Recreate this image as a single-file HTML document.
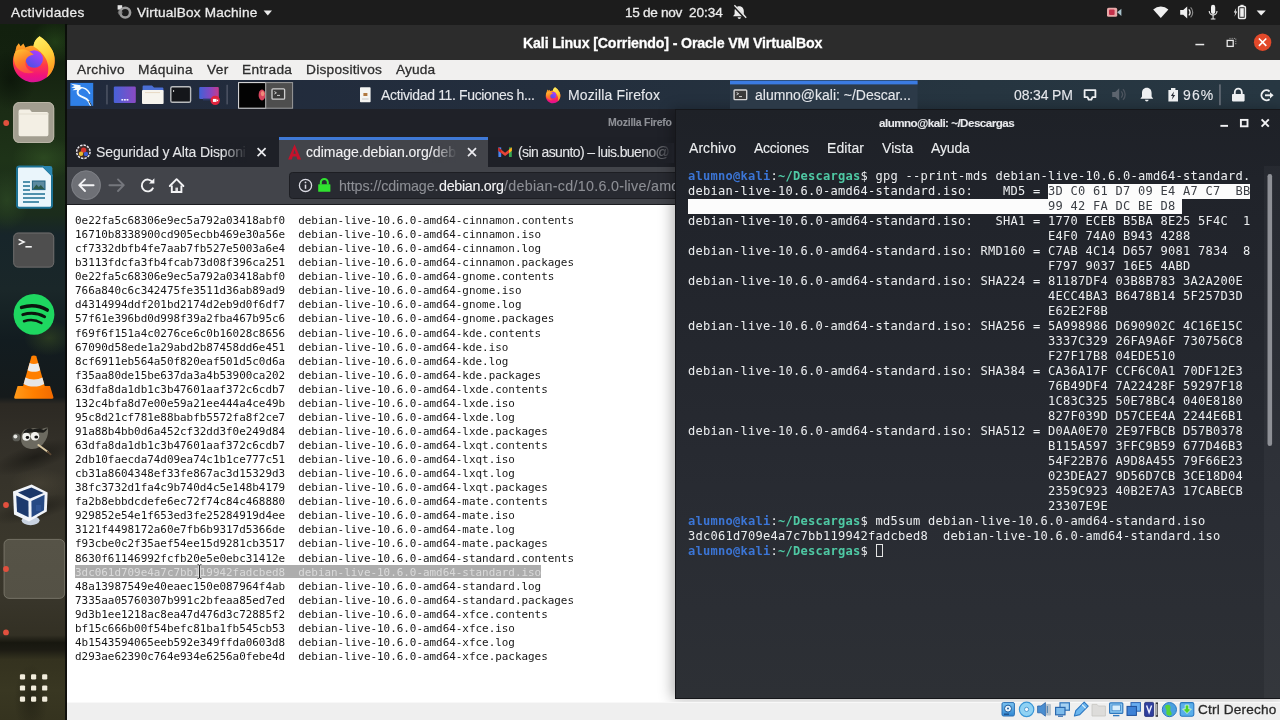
<!DOCTYPE html>
<html lang="es">
<head>
<meta charset="utf-8">
<title>Kali Linux [Corriendo] - Oracle VM VirtualBox</title>
<style>
*{box-sizing:border-box;margin:0;padding:0}
html,body{width:1280px;height:720px;overflow:hidden;background:#1d1d1d;font-family:"Liberation Sans",sans-serif;}
#root{position:relative;width:1280px;height:720px;overflow:hidden}
#root div,#root svg,#root pre,#root span.a{position:absolute}
.t{will-change:transform;-webkit-text-stroke:.3px;white-space:pre;font-family:"Liberation Sans",sans-serif}
/* gnome top bar */
#topbar{left:0;top:0;width:1280px;height:24.5px;background:#1c1c1c}
/* dock */
#dock{left:0;top:24px;width:68px;height:696px;overflow:hidden;background:linear-gradient(180deg,#12200e 0%,#13210f 5.2%,#1a2a14 10.9%,#1e3318 19.5%,#1b2c1c 27.4%,#17252a 30.3%,#1a2729 38.2%,#121c20 45.4%,#151a1b 53.6%,#2c2923 54.6%,#322f28 59.8%,#36332a 65.5%,#3a372c 74.1%,#38352a 82.8%,#333024 87.8%,#17170f 88.9%,#1c1b13 89.9%,#34321f 91.3%,#393722 95.7%,#35331f 100%)}
/* vbox */
#vtitle{left:67px;top:25px;width:1213px;height:35px;background:#2c2c2c}
#vmenu{left:67px;top:60px;width:1213px;height:20.5px;background:#f1f0ef}
#vstatus{left:67px;top:701.5px;width:1213px;height:19px;background:#efefef;border-top:1px solid #f8f8f8}
#vm{left:67px;top:80.4px;width:1213px;height:621.6px;background:#fff;overflow:hidden}
/* everything inside #vm uses page coords via wrapper shifted */
#vmi{left:-67px;top:-80.4px;width:1280px;height:720px}
#kpanel{left:67px;top:80.4px;width:1213px;height:28.6px;background:linear-gradient(90deg,#212a3c 0%,#232e3d 40%,#263540 75%,#273742 100%)}
#fftitle{left:67px;top:109px;width:608px;height:28px;background:#1f2128}
#fftabs{left:67px;top:137px;width:608px;height:30px;background:#1e2027}
#fftab{left:278.5px;top:137px;width:209.5px;height:30px;background:#42444a;border-top:3px solid #3f79d6}
#ffnav{left:67px;top:167px;width:608px;height:38px;background:#42444a;border-bottom:1.5px solid #1b1c20}
#ffurl{left:289.4px;top:171.6px;width:400px;height:27.8px;background:#282a31;border-radius:3.5px;border:1px solid #1d1e23}
#ffpage{left:67px;top:205px;width:608px;height:496px;background:#fff}
#list{will-change:transform;left:74.9px;top:213.7px;font-family:"DejaVu Sans Mono","Liberation Mono",monospace;font-size:10.93px;line-height:14.065px;color:#161616;white-space:pre;letter-spacing:-0.01px}
#list .sel{color:#dadada}
#term{left:674.5px;top:108.6px;width:612px;height:590.4px;background:linear-gradient(180deg,#1e2127 0%,#20232a 12%,#24272e 40%,#292c33 70%,#2d3035 100%);border:1px solid #15161a;box-shadow:-3px 0 13px rgba(0,0,0,.3)}
#tpre{will-change:transform;left:688px;top:168.5px;font-family:"DejaVu Sans Mono","Liberation Mono",monospace;font-size:12.05px;line-height:15px;color:#eceef0;white-space:pre;letter-spacing:0.246px}
#tpre b.u{color:#3b75d6;font-weight:700}
#tpre b.p{color:#4fc9a4;font-weight:700}
#tpre .hl{color:#3c3f45}
.thl{background:#fcfcfc}
#tpre .cur{display:inline-block;position:static;width:7.6px;height:13px;border:1px solid #e4e4e4;vertical-align:-1.6px}
</style>
</head>
<body>
<div id="root">
<div id="topbar"></div>
<div id="dock">
  <div style="left:30px;top:-4px;width:50px;height:44px;border-radius:50%;background:radial-gradient(closest-side,rgba(44,84,30,.55),rgba(44,84,30,0))"></div>
  <div style="left:-14px;top:26px;width:50px;height:60px;border-radius:50%;background:radial-gradient(closest-side,rgba(6,14,6,.6),rgba(6,14,6,0))"></div>
  <div style="left:12px;top:112px;width:64px;height:44px;border-radius:50%;background:radial-gradient(closest-side,rgba(52,86,38,.6),rgba(52,86,38,0))"></div>
  <div style="left:-16px;top:146px;width:46px;height:60px;border-radius:50%;background:radial-gradient(closest-side,rgba(50,82,38,.55),rgba(50,82,38,0))"></div>
  <div style="left:24px;top:296px;width:50px;height:36px;border-radius:50%;background:radial-gradient(closest-side,rgba(62,84,34,.5),rgba(62,84,34,0))"></div>
  <div style="left:-10px;top:420px;width:90px;height:26px;border-radius:50%;transform:rotate(-18deg);background:radial-gradient(closest-side,rgba(18,17,14,.6),rgba(18,17,14,0))"></div>
  <div style="left:-10px;top:474px;width:90px;height:22px;border-radius:50%;transform:rotate(-14deg);background:radial-gradient(closest-side,rgba(20,19,15,.55),rgba(20,19,15,0))"></div>
  <div style="left:10px;top:444px;width:60px;height:30px;border-radius:50%;background:radial-gradient(closest-side,rgba(84,78,62,.4),rgba(84,78,62,0))"></div>
  <div style="left:14px;top:640px;width:34px;height:70px;border-radius:50%;background:radial-gradient(closest-side,rgba(24,23,14,.5),rgba(24,23,14,0))"></div>
  <div style="left:65.2px;top:0;width:2px;height:696px;background:rgba(8,8,8,.8)"></div>
</div>
<div id="vtitle"></div>
<div id="vmenu"></div>
<div id="vm"><div id="vmi">
  <div id="ffpage"></div>
  <div id="kpanel"></div>
  <div id="fftitle"></div>
  <div id="fftabs"></div>
  <div id="fftab"></div>
  <div id="ffnav"></div>
  <div id="ffurl"></div>
  <div style="left:75px;top:564.5px;width:466.4px;height:13.6px;background:#adadad"></div>
  <pre id="list">0e22fa5c68306e9ec5a792a03418abf0  debian-live-10.6.0-amd64-cinnamon.contents
16710b8338900cd905ecbb469e30a56e  debian-live-10.6.0-amd64-cinnamon.iso
cf7332dbfb4fe7aab7fb527e5003a6e4  debian-live-10.6.0-amd64-cinnamon.log
b3113fdcfa3fb4fcab73d08f396ca251  debian-live-10.6.0-amd64-cinnamon.packages
0e22fa5c68306e9ec5a792a03418abf0  debian-live-10.6.0-amd64-gnome.contents
766a840c6c342475fe3511d36ab89ad9  debian-live-10.6.0-amd64-gnome.iso
d4314994ddf201bd2174d2eb9d0f6df7  debian-live-10.6.0-amd64-gnome.log
57f61e396bd0d998f39a2fba467b95c6  debian-live-10.6.0-amd64-gnome.packages
f69f6f151a4c0276ce6c0b16028c8656  debian-live-10.6.0-amd64-kde.contents
67090d58ede1a29abd2b87458dd6e451  debian-live-10.6.0-amd64-kde.iso
8cf6911eb564a50f820eaf501d5c0d6a  debian-live-10.6.0-amd64-kde.log
f35aa80de15be637da3a4b53900ca202  debian-live-10.6.0-amd64-kde.packages
63dfa8da1db1c3b47601aaf372c6cdb7  debian-live-10.6.0-amd64-lxde.contents
132c4bfa8d7e00e59a21ee444a4ce49b  debian-live-10.6.0-amd64-lxde.iso
95c8d21cf781e88babfb5572fa8f2ce7  debian-live-10.6.0-amd64-lxde.log
91a88b4bb0d6a452cf32dd3f0e249d84  debian-live-10.6.0-amd64-lxde.packages
63dfa8da1db1c3b47601aaf372c6cdb7  debian-live-10.6.0-amd64-lxqt.contents
2db10faecda74d09ea74c1b1ce777c51  debian-live-10.6.0-amd64-lxqt.iso
cb31a8604348ef33fe867ac3d15329d3  debian-live-10.6.0-amd64-lxqt.log
38fc3732d1fa4c9b740d4c5e148b4179  debian-live-10.6.0-amd64-lxqt.packages
fa2b8ebbdcdefe6ec72f74c84c468880  debian-live-10.6.0-amd64-mate.contents
929852e54e1f653ed3fe25284919d4ee  debian-live-10.6.0-amd64-mate.iso
3121f4498172a60e7fb6b9317d5366de  debian-live-10.6.0-amd64-mate.log
f93cbe0c2f35aef54ee15d9281cb3517  debian-live-10.6.0-amd64-mate.packages
8630f61146992fcfb20e5e0ebc31412e  debian-live-10.6.0-amd64-standard.contents
<span class="sel">3dc061d709e4a7c7bb119942fadcbed8  debian-live-10.6.0-amd64-standard.iso</span>
48a13987549e40eaec150e087964f4ab  debian-live-10.6.0-amd64-standard.log
7335aa05760307b991c2bfeaa85ed7ed  debian-live-10.6.0-amd64-standard.packages
9d3b1ee1218ac8ea47d476d3c72885f2  debian-live-10.6.0-amd64-xfce.contents
bf15c666b00f54befc81ba1fb545cb53  debian-live-10.6.0-amd64-xfce.iso
4b1543594065eeb592e349ffda0603d8  debian-live-10.6.0-amd64-xfce.log
d293ae62390c764e934e6256a0febe4d  debian-live-10.6.0-amd64-xfce.packages</pre>
  <div id="term"></div>
  <div class="thl" style="left:1048px;top:184.1px;width:201.9px;height:15.1px"></div>
  <div class="thl" style="left:688px;top:199px;width:494.4px;height:14.6px"></div>
  <pre id="tpre"><b class="u">alumno@kali</b>:<b class="p">~/Descargas</b>$ gpg --print-mds debian-live-10.6.0-amd64-standard.
debian-live-10.6.0-amd64-standard.iso:    MD5 = <span class="hl">3D C0 61 D7 09 E4 A7 C7  BB</span>
<span class="hl">                                                99 42 FA DC BE D8 </span>
debian-live-10.6.0-amd64-standard.iso:   SHA1 = 1770 ECEB B5BA 8E25 5F4C  1
                                                E4F0 74A0 B943 4288
debian-live-10.6.0-amd64-standard.iso: RMD160 = C7AB 4C14 D657 9081 7834  8
                                                F797 9037 16E5 4ABD
debian-live-10.6.0-amd64-standard.iso: SHA224 = 81187DF4 03B8B783 3A2A200E
                                                4ECC4BA3 B6478B14 5F257D3D
                                                E62E2F8B
debian-live-10.6.0-amd64-standard.iso: SHA256 = 5A998986 D690902C 4C16E15C
                                                3337C329 26FA9A6F 730756C8
                                                F27F17B8 04EDE510
debian-live-10.6.0-amd64-standard.iso: SHA384 = CA36A17F CCF6C0A1 70DF12E3
                                                76B49DF4 7A22428F 59297F18
                                                1C83C325 50E78BC4 040E8180
                                                827F039D D57CEE4A 2244E6B1
debian-live-10.6.0-amd64-standard.iso: SHA512 = D0AA0E70 2E97FBCB D57B0378
                                                B115A597 3FFC9B59 677D46B3
                                                54F22B76 A9D8A455 79F66E23
                                                023DEA27 9D56D7CB 3CE18D04
                                                2359C923 40B2E7A3 17CABECB
                                                23307E9E
<b class="u">alumno@kali</b>:<b class="p">~/Descargas</b>$ md5sum debian-live-10.6.0-amd64-standard.iso
3dc061d709e4a7c7bb119942fadcbed8  debian-live-10.6.0-amd64-standard.iso
<b class="u">alumno@kali</b>:<b class="p">~/Descargas</b>$ <span class="cur"></span></pre>
</div></div>
<div id="vstatus"></div>
<svg id="ov" style="left:0;top:0" width="1280" height="720" viewBox="0 0 1280 720">
<defs>
<linearGradient id="ffb" x1="0" y1="0" x2="0" y2="1"><stop offset="0" stop-color="#ffc53a"/><stop offset=".34" stop-color="#ff8a1f"/><stop offset=".62" stop-color="#ff3a48"/><stop offset=".86" stop-color="#f0127e"/><stop offset="1" stop-color="#d81496"/></linearGradient>
<linearGradient id="fff" x1="0" y1="0" x2="0.3" y2="1"><stop offset="0" stop-color="#fff36a"/><stop offset=".55" stop-color="#ffd23a"/><stop offset="1" stop-color="#ff9a20"/></linearGradient>
<linearGradient id="fft" x1="0.2" y1="0" x2="0.6" y2="1"><stop offset="0" stop-color="#ffbe30"/><stop offset=".55" stop-color="#ff7a26"/><stop offset="1" stop-color="#ff4a4a"/></linearGradient>
<linearGradient id="ffg" x1="0.8" y1="0" x2="0.2" y2="1"><stop offset="0" stop-color="#b13cff"/><stop offset="1" stop-color="#4a52e6"/></linearGradient>
<linearGradient id="pur" x1="0" y1="0" x2="1" y2="0"><stop offset="0" stop-color="#4762d8"/><stop offset="1" stop-color="#8a4ac4"/></linearGradient>
<linearGradient id="rec" x1="0" y1="0" x2="1" y2="0"><stop offset="0" stop-color="#3f62d6"/><stop offset=".6" stop-color="#8a46c0"/><stop offset="1" stop-color="#c83a8a"/></linearGradient>
<linearGradient id="vlc" x1="0" y1="0" x2="1" y2="0"><stop offset="0" stop-color="#ff9a1a"/><stop offset=".5" stop-color="#ff7f00"/><stop offset="1" stop-color="#f26a00"/></linearGradient>
<linearGradient id="sbl" x1="0" y1="0" x2="0" y2="1"><stop offset="0" stop-color="#7cc4f2"/><stop offset="1" stop-color="#2f86d2"/></linearGradient>
<g id="ffx">
  <path d="M11.2,24 L12.4,18.6 L14.8,15.2 L16.6,18.2 L19.4,15.6 L21.4,19.4 C24,18 27,17.6 29.6,17.8 C29.8,14 32,10.6 35.6,8.3 C40.5,11.5 44.5,15.5 46.6,19.5 C49.6,23.4 51,28.6 50.6,33.6 C50.2,45 41,54.2 29.6,54.2 C18.2,54.2 8.9,45 8.9,33.4 C8.9,30 9.7,26.8 11.2,24 Z" fill="url(#ffb)"/>
  <path d="M35.6,8.3 C40.5,11.5 44.5,15.5 46.6,19.5 C50.2,24 51.6,31 50.2,38 C49,43 46,47 42.6,49.6 C45,44 45,37 42,31 C39,25.4 34.4,21.4 29.6,18.6 C29.6,14.4 32,10.6 35.6,8.3 Z" fill="url(#fff)"/>
  <circle cx="30.2" cy="31" r="8.8" fill="url(#ffg)"/>
  <path d="M11.4,23.4 C17,19.6 24,21 29.8,26.8 C25,27.2 21.6,30 21.3,34.6 C21.1,39.6 25,43.4 30.2,44 C23,47.4 14,43.4 11,36.2 C9.4,31.8 9.6,27.2 11.4,23.4 Z" fill="url(#fft)"/>
</g>
</defs>

<!-- ============ GNOME TOP BAR ============ -->
<g>
  <rect x="117.6" y="5.2" width="4.6" height="4.4" fill="#e4e4e4"/>
  <circle cx="125.2" cy="12.6" r="4.9" fill="none" stroke="#9c9c9c" stroke-width="2.6"/>
  <circle cx="120.2" cy="12.5" r="2.4" fill="#8a8a8a" opacity=".7"/>
  <path d="M263.6,10.4 h8.4 l-4.2,5 z" fill="#ebebeb"/>
  <!-- bell muted -->
  <path d="M739.2,6.2 c-3,0 -4.6,2.3 -4.6,5 v3 l-1.6,2 h12.4 l-1.6,-2 v-3 c0,-2.7 -1.6,-5 -4.6,-5 z M737.6,17.2 a1.7,1.7 0 0 0 3.4,0 z" fill="#ebebeb"/>
  <path d="M733.6,5.6 L745.6,18.4" stroke="#1c1c1c" stroke-width="2.6"/>
  <path d="M734.4,5.2 L746.2,17.8" stroke="#ebebeb" stroke-width="1.3"/>
  <!-- camera (screen recording) -->
  <rect x="1107" y="7.8" width="10.2" height="9" rx="1.6" fill="#e9a9a9"/>
  <rect x="1109" y="9.6" width="5.6" height="5.4" rx="1" fill="#c4314b"/>
  <path d="M1117.2,12.3 l4.2,-3.6 v7.4 z" fill="#a9c3cc"/>
  <!-- wifi -->
  <path d="M1160.8,18 L1153.2,9.4 A11.4,11.4 0 0 1 1168.4,9.4 Z" fill="#efefef"/>
  <!-- volume -->
  <path d="M1180.2,10 h3 l4,-3.6 v12 l-4,-3.6 h-3 z" fill="#efefef"/>
  <path d="M1188.8,9.4 a4.2,4.2 0 0 1 0,6" fill="none" stroke="#efefef" stroke-width="1.3"/>
  <path d="M1190.6,7.4 a7,7 0 0 1 0,10" fill="none" stroke="#8a8a8a" stroke-width="1.2"/>
  <!-- mic -->
  <rect x="1211" y="4.8" width="4.2" height="9.2" rx="2.1" fill="#efefef"/>
  <path d="M1209.2,11 a3.9,3.9 0 0 0 7.8,0" fill="none" stroke="#efefef" stroke-width="1.1"/>
  <path d="M1213.1,15 v3.6 M1210.8,19 h4.6" stroke="#efefef" stroke-width="1.1"/>
  <!-- battery -->
  <path d="M1236.2,8 l-2.4,4.6 h1.6 l-1,4.2 l2.8,-5.2 h-1.6 z" fill="#efefef"/>
  <rect x="1238.6" y="6.4" width="6.8" height="12" rx="1" fill="none" stroke="#efefef" stroke-width="1.5"/>
  <rect x="1240.4" y="4.8" width="3.2" height="1.8" fill="#efefef"/>
  <rect x="1240.2" y="8.2" width="3.6" height="8.6" fill="#efefef"/>
  <path d="M1256.6,10.4 h9.2 l-4.6,5.2 z" fill="#efefef"/>
</g>

<!-- ============ VBOX TITLE BUTTONS ============ -->
<g>
  <rect x="1195.4" y="43.8" width="8.8" height="1.5" fill="#e8e8e8"/>
  <rect x="1227.2" y="40.4" width="6" height="6" fill="none" stroke="#e8e8e8" stroke-width="1.3"/>
  <path d="M1229.4,38.4 h6.4 v6.4" fill="none" stroke="#9a9a9a" stroke-width="1" stroke-dasharray="1.2 1"/>
  <circle cx="1262.6" cy="42.2" r="8.7" fill="#e2492a"/>
  <path d="M1258.9,38.5 l7.4,7.4 M1266.3,38.5 l-7.4,7.4" stroke="#fff" stroke-width="1.6"/>
</g>

<!-- ============ DOCK ============ -->
<g>
  <use href="#ffx" transform="translate(4,28)"/>
  <!-- Files -->
  <circle cx="6.2" cy="123" r="2.9" fill="#e2503e"/>
  <rect x="13.2" y="102" width="41" height="41" rx="6" fill="#a29e90"/>
  <rect x="13.7" y="102.5" width="40" height="40" rx="5.6" fill="none" stroke="#b9b5a6" stroke-width="1"/>
  <path d="M18.6,111.2 a1.6,1.6 0 0 1 1.6,-1.6 h9.6 l2,2.4 h15 a1.6,1.6 0 0 1 1.6,1.6 v21 a1.6,1.6 0 0 1 -1.6,1.6 h-26.6 a1.6,1.6 0 0 1 -1.6,-1.6 z" fill="#f3efe4"/>
  <path d="M18.6,114 h30" stroke="#e2ddcf" stroke-width="1"/>
  <!-- Writer -->
  <path d="M19.4,166.4 h23.6 l9,9 v30 a2.4,2.4 0 0 1 -2.4,2.4 h-30.200000000000003 a2.4,2.4 0 0 1 -2.4,-2.4 v-36.6 a2.4,2.4 0 0 1 2.4,-2.4 z" fill="#eaf5fb" stroke="#1d7294" stroke-width="2"/>
  <path d="M42,166 l10.400000000000002,10.400000000000002 v-8 a2.4,2.4 0 0 0 -2.4,-2.4 z" fill="#2a86b0"/>
  <path d="M42.6,167 v8.6 h8.6" fill="#8fd0ea" opacity=".0"/>
  <rect x="32.4" y="181" width="12.6" height="8.6" fill="#5c8aa0" stroke="#1d5f7e" stroke-width="1"/>
  <path d="M33,189 l3.4,-4.6 l2.4,2.6 l2,-2 l3.6,4 z" fill="#2c5a4a"/>
  <path d="M23,182 h7 M23,186 h7 M23,190 h7 M23,194 h22 M23,198 h22 M23,202 h16" stroke="#1d6f92" stroke-width="1.5"/>
  <!-- Terminal -->
  <rect x="13.2" y="232.6" width="41" height="35" rx="5" fill="#4e4e4e"/>
  <rect x="13.7" y="233.1" width="40" height="34" rx="4.6" fill="none" stroke="#6a6a6a" stroke-width="1"/>
  <path d="M18.6,239.4 l5.4,2.6 l-5.4,2.6" fill="none" stroke="#f4f4f4" stroke-width="1.6"/>
  <rect x="25.4" y="246" width="6.4" height="1.6" fill="#f4f4f4"/>
  <!-- Spotify -->
  <circle cx="34" cy="314.4" r="20.4" fill="#1ed760"/>
  <path d="M21.6,307.4 c8.6,-2.600000000000001 18.4,-1.6 25.6,2.6" fill="none" stroke="#0c140e" stroke-width="3.6" stroke-linecap="round"/>
  <path d="M22.8,314.6 c7.4,-2.2 15.6,-1.4 21.8,2.2" fill="none" stroke="#0c140e" stroke-width="3" stroke-linecap="round"/>
  <path d="M24,321.2 c6,-1.8 12.4,-1.2 17.4,1.8" fill="none" stroke="#0c140e" stroke-width="2.5" stroke-linecap="round"/>
  <!-- VLC -->
  <path d="M17.6,386 h32.4 l3.4,11 a1.4,1.4 0 0 1 -1.4,1.8 h-36.4 a1.4,1.4 0 0 1 -1.4,-1.8 z" fill="url(#vlc)"/>
  <path d="M31.4,356.6 a2.6,1.6 0 0 1 5,0 l8.6,30.4 c-4,4 -18.2,4 -22.2,0 z" fill="#ff7f00"/>
  <path d="M29.6,363 c2.4,1.4 6.2,1.4 8.6,0 l2,7.2 c-3.2,2 -9.400000000000002,2 -12.6,0 z" fill="#ececec"/>
  <path d="M25.4,377.6 c4.4,2.6 12.6,2.6 17,0 l1.8,6.4 c-5,3.4 -15.6,3.4 -20.6,0 z" fill="#e6e6e6"/>
  <!-- GIMP -->
  <g transform="translate(33,438.6) scale(.96,.8) translate(-33,-439)">
  <path d="M21,434 c1,-6 5,-8.6 9,-7 c3,-2 8,-1.6 10.6,0.6 c2.4,-1 5.4,-2.8 7.6,-2.6 c1.4,6 0,13 -3.6,18.6 c-2.6,5.6 -8.6,9.4 -15,8 c-5.4,-1 -9,-5.6 -9,-11 z" fill="#6c6a60"/>
  <path d="M22.6,432.6 c2,-5.6 7,-7.6 10.4,-5 c3,-2 8.6,-1.6 11,1 c1.6,-1.4 3.4,-2.4 4.2,-2.4 c-1,2.6 -2.6,4.6 -4.600000000000001,5.6 c-6,-1.6 -15,-0.6 -21,0.8 z" fill="#1d1d1a"/>
  <ellipse cx="26" cy="436.8" rx="4.1" ry="5" fill="#f2f2ee"/>
  <ellipse cx="35" cy="436" rx="4.5" ry="5.4" fill="#f2f2ee"/>
  <circle cx="27.2" cy="437.6" r="1.8" fill="#111"/>
  <circle cx="36.4" cy="437" r="2" fill="#111"/>
  </g>
  <circle cx="16.4" cy="437.4" r="3.9" fill="#5c5c56"/>
  <circle cx="15.4" cy="436.4" r="2" fill="#e6e6e2"/>
  <path d="M38.4,445 l9.6,7" stroke="#dccaa4" stroke-width="2" stroke-linecap="round"/>
  <path d="M47.6,451.8 l3,2.6" stroke="#5a4632" stroke-width="1.8" stroke-linecap="round"/>
  <!-- VirtualBox -->
  <circle cx="6" cy="505" r="2.9" fill="#e2503e"/>
  <ellipse cx="30.6" cy="520.6" rx="9" ry="4.6" fill="#c9d3e2"/>
  <path d="M13,491.6 L31.6,484.6 L47.6,492.6 L46.8,511.6 L29,521.6 L14,514.6 Z" fill="#f2f5fa"/>
  <path d="M16.2,495.4 L28.4,501 L28.6,517.2 L17,511.8 Z" fill="#1d3a6e"/>
  <path d="M31.4,501 L44.6,494.8 L44,510.2 L31.6,517.2 Z" fill="#274a84"/>
  <path d="M18,492.4 L31.4,487.4 L43.6,493 L30,498.6 Z" fill="#1b3768"/>
  <path d="M36,505 h5 v6 h-5 z" fill="#35599a" opacity=".7"/>
  <!-- focused slot -->
  <rect x="4" y="539.4" width="60.6" height="59" rx="5" fill="#8d8a7c" fill-opacity=".34" stroke="#a9a698" stroke-opacity=".45" stroke-width="1"/>
  <circle cx="6" cy="569" r="2.9" fill="#e2503e"/>
  <circle cx="6" cy="632.4" r="2.9" fill="#e2503e"/>
  <!-- grid -->
  <g fill="#f1ecdc">
    <rect x="19.9" y="674.2" width="5.2" height="5.2" rx="1.2"/><rect x="31" y="674.2" width="5.2" height="5.2" rx="1.2"/><rect x="42.1" y="674.2" width="5.2" height="5.2" rx="1.2"/>
    <rect x="19.9" y="685.4" width="5.2" height="5.2" rx="1.2"/><rect x="31" y="685.4" width="5.2" height="5.2" rx="1.2"/><rect x="42.1" y="685.4" width="5.2" height="5.2" rx="1.2"/>
    <rect x="19.9" y="696.5" width="5.2" height="5.2" rx="1.2"/><rect x="31" y="696.5" width="5.2" height="5.2" rx="1.2"/><rect x="42.1" y="696.5" width="5.2" height="5.2" rx="1.2"/>
  </g>
</g>
<!-- ============ KALI PANEL ============ -->
<g>
  <rect x="730" y="80.4" width="187.6" height="28.4" fill="#2c3a48"/>
  <rect x="730" y="80.6" width="187.6" height="3.8" fill="#3b7be2"/>
  <!-- kali menu -->
  <rect x="70.3" y="82.9" width="22.9" height="23" fill="#2f80e8"/>
  <path d="M80.6,85.2 L70.8,83.7 L74.6,86 L71.3,87.5 L75.4,88.3 L72.4,90.2 L80,89.8 Z" fill="#f4fbff"/>
  <path d="M80.6,88.2 C76.8,90 76.4,94.2 80.4,96 C84.8,97.8 88.4,99 90.4,104.8" fill="none" stroke="#f4fbff" stroke-width="1.9" stroke-linecap="round"/>
  <path d="M80.2,87.6 C84,87.6 87.6,89.8 89.6,93.4" fill="none" stroke="#f4fbff" stroke-width="1.5" stroke-linecap="round"/>
  <path d="M89,101 L91.6,105.6" stroke="#16202e" stroke-width=".9"/>
  <rect x="106.2" y="84.8" width="1.5" height="19.6" fill="#4d5464"/>
  <rect x="226.4" y="84.8" width="1.5" height="19.6" fill="#4d5464"/>
  <!-- launcher 1 -->
  <rect x="113.8" y="86.6" width="22" height="16.4" rx="1.2" fill="url(#pur)"/>
  <rect x="121.4" y="99" width="1.8" height="1.6" fill="#f0f0ff"/><rect x="124" y="99" width="1.8" height="1.6" fill="#f0f0ff"/><rect x="126.6" y="99" width="1.8" height="1.6" fill="#f0f0ff"/>
  <!-- folder -->
  <path d="M142.6,86.4 a1,1 0 0 1 1,-1 h8.4 l2,2 h8.4 a1,1 0 0 1 1,1 v3 h-20.8 z" fill="#4a6fd6"/>
  <rect x="142" y="90" width="21.6" height="14" rx="1" fill="#f6f4ee"/>
  <path d="M145,92.6 h15" stroke="#e6d9c4" stroke-width="1"/>
  <!-- terminal launcher -->
  <rect x="170.8" y="86.7" width="19.8" height="15.6" rx="1.6" fill="#14161a" stroke="#b9bbbd" stroke-width="1.4"/>
  <path d="M173.6,90 v2" stroke="#d0d0d0" stroke-width="1"/>
  <!-- recorder -->
  <rect x="199.2" y="87.1" width="19.6" height="11.8" rx="1" fill="url(#rec)"/>
  <rect x="203" y="98.6" width="9" height="1.8" fill="#2d3a66"/>
  <circle cx="215.2" cy="100.4" r="4.7" fill="#e0243e"/>
  <rect x="212.9" y="98.9" width="3.6" height="3" fill="#fff"/>
  <path d="M216.5,100.4 l1.6,-1.2 v2.4 z" fill="#fff"/>
  <!-- workspaces -->
  <rect x="238.6" y="82.6" width="27.2" height="25.6" fill="#030303" stroke="#e6e6e6" stroke-width="1"/>
  <ellipse cx="262" cy="95" rx="3.4" ry="5.4" fill="#d8455e"/>
  <ellipse cx="262.6" cy="93.6" rx="1.8" ry="2.6" fill="#f08a7a"/>
  <rect x="265.8" y="82.6" width="26.8" height="25.6" fill="#4e4e4e" stroke="#9c9c9c" stroke-width="1"/>
  <rect x="272" y="88.8" width="12.6" height="10.4" rx="1" fill="#3a3a3a" stroke="#cfcfcf" stroke-width="1.3"/>
  <path d="M274.4,91.6 l2,1.2 l-2,1.2" fill="none" stroke="#e0e0e0" stroke-width=".9"/>
  <path d="M277,95.4 h3" stroke="#e0e0e0" stroke-width=".9"/>
  <!-- task: doc -->
  <rect x="360" y="87.2" width="10.6" height="15" rx=".8" fill="#f4f4f2"/>
  <rect x="363.4" y="93" width="4" height="3" fill="#b07840"/>
  <path d="M362,99 h6.6" stroke="#c8c8c8" stroke-width="1"/>
  <!-- task: firefox -->
  <use href="#ffx" transform="translate(542.6,84.3) scale(0.35)"/>
  <!-- task: terminal -->
  <rect x="734.1" y="90" width="12.6" height="9.6" rx=".8" fill="#3b3b3b" stroke="#d6d6d6" stroke-width="1.4"/>
  <path d="M736.6,92.6 l2,1.1 l-2,1.1" fill="none" stroke="#e8e8e8" stroke-width=".9"/>
  <path d="M739,96.6 h3" stroke="#e8e8e8" stroke-width=".9"/>
  <!-- tray: display -->
  <path d="M1084.6,90.2 h10.8 v7 h-3 l-1,2.4 h-2.8 l-1,-2.4 h-3 z" fill="none" stroke="#eef0f2" stroke-width="1.8" stroke-linejoin="round"/>
  <!-- volume muted -->
  <path d="M1112.2,92 h3 l4,-3.8 v12.6 l-4,-3.8 h-3 z" fill="#5c646e"/>
  <path d="M1121.2,91.4 a4.6,4.6 0 0 1 0,6.2 M1123,89.2 a7.6,7.6 0 0 1 0,10.6" fill="none" stroke="#4c545e" stroke-width="1.3"/>
  <!-- bell -->
  <path d="M1146.8,87.8 c-3.2,0 -4.8,2.4 -4.8,5.2 v3.6 l-1.6,2.2 h12.8 l-1.6,-2.2 v-3.6 c0,-2.8 -1.6,-5.2 -4.800000000000001,-5.2 z M1145,99.8 a1.8,1.8 0 0 0 3.6,0 z" fill="#eef0f2"/>
  <!-- battery -->
  <path d="M1168.4,90 h2.6 v-2 h4.4 v2 h2.6 v11.4 h-9.6 z" fill="#eef0f2"/>
  <path d="M1174,91.6 l-3.2,4.4 h2 l-1,3.800000000000001 l3.4,-4.800000000000001 h-2 z" fill="#262c36"/>
  <rect x="1219.2" y="84.4" width="1.5" height="20.8" fill="#6c727c"/>
  <!-- lock -->
  <rect x="1232" y="94" width="12.6" height="7.4" rx=".8" fill="#eef0f2"/>
  <path d="M1234.8,94.4 v-2.2 a3.5,3.5 0 0 1 7,0 v2.2" fill="none" stroke="#eef0f2" stroke-width="1.8"/>
  <!-- logout -->
  <path d="M1269.6,91.4 a5,5 0 1 0 0,7.8" fill="none" stroke="#eef0f2" stroke-width="1.9"/>
  <path d="M1265,95.3 h5.4" stroke="#eef0f2" stroke-width="1.9"/>
  <path d="M1270,92.2 l3.6,3.1 l-3.6,3.1 z" fill="#eef0f2"/>
</g>
<!-- ============ FIREFOX CHROME ============ -->
<g>
  <!-- tab 1 favicon -->
  <circle cx="83.4" cy="151.8" r="6.7" fill="#3a2a2a" stroke="#e9e9ee" stroke-width="1.5" stroke-dasharray="2.4 1.1"/>
  <circle cx="83.6" cy="150.2" r="2.6" fill="#d8342e"/>
  <circle cx="81" cy="153.8" r="2.2" fill="#e8b82e"/>
  <circle cx="86" cy="154" r="2.2" fill="#3a5ad0"/>
  <path d="M257.6,148.2 l8,8 M265.6,148.2 l-8,8" stroke="#ececf0" stroke-width="1.7"/>
  <!-- active favicon: red A -->
  <path fill-rule="evenodd" d="M294.6,144.2 l6.5,15.2 h-3.7 l-1,-2.8 h-3.6 l-1,2.8 h-3.7 z M294.6,149.8 l-1.2,4 h2.4 z" fill="#c4122c"/>
  <path d="M468,148.2 l8,8 M476,148.2 l-8,8" stroke="#ececf0" stroke-width="1.7"/>
  <!-- gmail -->
  <path d="M498.400000000000006,147.4 h2.8 v9.6 h-2.8 z" fill="#4a86f0"/>
  <path d="M509,147.4 h2.8 v9.6 h-2.8 z" fill="#38a852"/>
  <path d="M498.400000000000006,147.4 l6.7,5.4 l6.7,-5.4 v3.4 l-6.7,5.2 l-6.7,-5.2 z" fill="#e84436"/>
  <path d="M509,149.8 l2.8,-2.4 v3.4 l-2.8,2.2 z" fill="#f6bb1a"/>
  <path d="M498.4,147.4 l2.8,2.4 v3.2 l-2.8,-2.2 z" fill="#c5221f"/>
  <!-- back -->
  <circle cx="86.1" cy="185.2" r="14.8" fill="#6e7076"/>
  <circle cx="86.1" cy="185.2" r="14.3" fill="none" stroke="#7c7e84" stroke-width="1"/>
  <path d="M93.6,185.2 h-14 M85,179.400000000000006 l-5.8,5.8 l5.8,5.8" fill="none" stroke="#f4f4f6" stroke-width="1.9" stroke-linecap="round" stroke-linejoin="round"/>
  <path d="M109.4,185.2 h14 M118,179.400000000000006 l5.8,5.8 l-5.8,5.8" fill="none" stroke="#75777d" stroke-width="1.9" stroke-linecap="round" stroke-linejoin="round"/>
  <!-- reload -->
  <path d="M152.6,182.2 a5.9,5.9 0 1 0 0.6,5.4" fill="none" stroke="#f4f4f6" stroke-width="1.9"/>
  <path d="M154.400000000000006,178.2 v5.4 h-5.4 z" fill="#f4f4f6"/>
  <!-- home -->
  <path d="M169.8,186 l6.8,-6.8 l6.8,6.8" fill="none" stroke="#f4f4f6" stroke-width="1.9" stroke-linejoin="round" stroke-linecap="round"/>
  <path d="M171.8,185.6 v6.4 h9.6 v-6.4" fill="none" stroke="#f4f4f6" stroke-width="1.9"/>
  <rect x="175.4" y="187.6" width="2.6" height="4.4" fill="#f4f4f6" opacity=".85"/>
  <!-- info -->
  <circle cx="305.5" cy="185.4" r="6.1" fill="none" stroke="#dcdce4" stroke-width="1.3"/>
  <path d="M305.5,184.6 v4.2" stroke="#dcdce4" stroke-width="1.5"/><circle cx="305.5" cy="182.4" r=".9" fill="#dcdce4"/>
  <!-- lock -->
  <rect x="318.2" y="184.2" width="12.2" height="7.6" rx=".6" fill="#30e230"/>
  <path d="M320.8,184.6 v-2.2 a3.5,3.5 0 0 1 7,0 v2.2" fill="none" stroke="#30e230" stroke-width="2"/>
</g>
<!-- ibeam cursor -->
<g>
  <path d="M197.4,564.9 h1.6 l0.5,0.6 l0.5,-0.6 h1.6 M199.5,565.2 v12.8 M197.4,578.3 h1.6 l0.5,-0.6 l0.5,0.6 h1.6" fill="none" stroke="#f4f4f4" stroke-width="2.4" stroke-opacity=".85"/>
  <path d="M197.4,564.9 h1.6 l0.5,0.6 l0.5,-0.6 h1.6 M199.5,565.2 v12.8 M197.4,578.3 h1.6 l0.5,-0.6 l0.5,0.6 h1.6" fill="none" stroke="#2a2a2a" stroke-width="1"/>
</g>
<!-- ============ TERMINAL CHROME ============ -->
<g>
  <rect x="1220.4" y="124.9" width="7.6" height="1.9" fill="#f2f2f4"/>
  <rect x="1240.9" y="119.9" width="6.6" height="6.4" fill="none" stroke="#f2f2f4" stroke-width="1.9"/>
  <path d="M1261.6,119.4 l7.2,7.2 M1268.8,119.4 l-7.2,7.2" stroke="#f2f2f4" stroke-width="2"/>
  <rect x="1264" y="166" width="16" height="532" fill="#ffffff" fill-opacity=".035"/>
  <rect x="1267.5" y="174" width="4.6" height="272" rx="2.3" fill="#8e9096"/>
</g>
<!-- ============ VBOX STATUS BAR ============ -->
<g>
  <!-- hdd -->
  <rect x="1002" y="702.6" width="12.4" height="13.4" rx="1.4" fill="url(#sbl)" stroke="#2a6fb4" stroke-width="1"/>
  <circle cx="1008" cy="708.6" r="3.5" fill="#eaf4fc" stroke="#1d5a9a" stroke-width="1"/>
  <circle cx="1008" cy="708.6" r="1" fill="#1d5a9a"/>
  <path d="M1004,714.2 h5" stroke="#1d4f8a" stroke-width="1.4"/>
  <!-- cd -->
  <circle cx="1026.6" cy="709.4" r="7.2" fill="#8fd2f4" stroke="#3a96d6" stroke-width="1.2"/>
  <circle cx="1026.6" cy="709.4" r="2.1" fill="#f2f9fe" stroke="#3a8ac8" stroke-width=".8"/>
  <!-- audio -->
  <path d="M1037.6,706 h3.4 l4.4,-3.4 v13.6 l-4.4,-3.4 h-3.400000000000001 z" fill="#4a8ed0" stroke="#2a62a6" stroke-width=".8"/>
  <rect x="1046" y="704" width="5" height="11.4" rx="1" fill="#b6c2cc"/>
  <path d="M1047.4,706 v7" stroke="#5a87b2" stroke-width="1.2"/>
  <!-- network -->
  <rect x="1060" y="702.8" width="9.4" height="7.4" fill="#a6d2f2" stroke="#2f74ba" stroke-width="1.2"/>
  <rect x="1055.600000000000023" y="707.4" width="9.4" height="7.4" fill="#7ebcec" stroke="#2a68ae" stroke-width="1.2"/>
  <path d="M1058,716.2 h5" stroke="#2a68ae" stroke-width="1.2"/>
  <!-- usb -->
  <path d="M1074.4,716 l1.4,-5.4 l8.4,-8.4 l4,4 l-8.4,8.4 z" fill="#6cb6ee" stroke="#2a76c0" stroke-width="1.1" stroke-linejoin="round"/>
  <path d="M1082,704.6 l3.6,3.6" stroke="#eaf5fd" stroke-width="1.1"/>
  <!-- shared folder (disabled) -->
  <path d="M1092,704.4 h5 l1.400000000000001,1.6 h7 v10 h-13.4 z" fill="#dddcda" stroke="#c6c5c2" stroke-width=".8"/>
  <!-- display -->
  <rect x="1109.6" y="702.8" width="13.2" height="10.6" rx="1" fill="#8cc8f2" stroke="#2f78be" stroke-width="1.2"/>
  <rect x="1112" y="705" width="8.4" height="5.8" fill="#d8eefc" stroke="#3a84c8" stroke-width=".8"/>
  <path d="M1113,715.6 h6.4" stroke="#2f78be" stroke-width="1.4"/>
  <!-- recording -->
  <rect x="1131" y="702.6" width="9.4" height="8.6" fill="#6aaef0" stroke="#2a62b0" stroke-width="1"/>
  <rect x="1127" y="706.4" width="9.4" height="9" fill="#3f82d6" stroke="#1f4f9a" stroke-width="1"/>
  <!-- cpu -->
  <rect x="1144.6" y="702.4" width="9" height="14" rx="1" fill="#2f3f9e" stroke="#1a2670" stroke-width=".8"/>
  <path d="M1146.6,705.6 l2.5,7 l2.5,-7" fill="none" stroke="#eef0ff" stroke-width="1.4"/>
  <rect x="1155.6" y="702.4" width="2.4" height="14.4" fill="#33353a"/>
  <rect x="1156.3" y="704" width="1" height="11.2" fill="#e6e6e6"/>
  <!-- mouse -->
  <circle cx="1169.4" cy="709.6" r="7.1" fill="#4aa0e0" stroke="#2a78c0" stroke-width="1"/>
  <path d="M1165.4,705.6 c3,-2 6,0 5,3 c-1,2.6 2,3.6 1,6.4 c-3,1.6 -6,0 -5,-3.2 c0.8,-2.6 -2,-3.6 -1,-6.2 z" fill="#58d23a"/>
  <!-- keyboard -->
  <rect x="1180.2" y="702.6" width="13.6" height="13.6" rx="1.6" fill="#58aeea" stroke="#2a78c0" stroke-width="1.1"/>
  <path d="M1185.2,705 h3.6 v4 h2.6 l-4.4,4.6 l-4.4,-4.6 h2.6 z" fill="#4cd22e" stroke="#f2fff0" stroke-width=".7"/>
</g>


</svg>

<div id="ffclip" style="left:0;top:0;width:674.5px;height:720px;overflow:hidden">
<div class="t" style="left:608.40px;top:117.41px;font-size:10.5px;line-height:10.5px;color:#8e9096;font-weight:700;-webkit-text-stroke:.1px;letter-spacing:-0.238px;">Mozilla Firefo</div>
<div class="t" style="left:96.40px;top:144.95px;font-size:14px;line-height:14px;color:#e4e5e8;font-weight:400;-webkit-text-stroke:.1px;letter-spacing:-0.111px;">Seguridad y Alta Disponi</div>
<div class="t" style="left:306.40px;top:144.95px;font-size:14px;line-height:14px;color:#f2f2f4;font-weight:400;-webkit-text-stroke:.1px;letter-spacing:-0.011px;">cdimage.debian.org/deb</div>
<div class="t" style="left:517.60px;top:144.95px;font-size:14px;line-height:14px;color:#e4e5e8;font-weight:400;-webkit-text-stroke:.1px;letter-spacing:-0.598px;">(sin asunto) – luis.bueno@</div>
<div class="t" style="left:338.90px;top:179.10px;font-size:14.3px;line-height:14.3px;color:#8d8f95;font-weight:400;-webkit-text-stroke:.1px;letter-spacing:-0.096px;">https://cdimage.</div>
<div class="t" style="left:439.00px;top:179.10px;font-size:14.3px;line-height:14.3px;color:#f4f4f6;font-weight:400;-webkit-text-stroke:.1px;letter-spacing:-0.298px;">debian.org</div>
<div class="t" style="left:504.10px;top:179.10px;font-size:14.3px;line-height:14.3px;color:#8d8f95;font-weight:400;-webkit-text-stroke:.1px;letter-spacing:0.273px;">/debian-cd/10.6.0-live/amd</div>
<div style="left:222px;top:143px;width:27px;height:20px;background:linear-gradient(90deg,rgba(30,32,39,0),#1e2027 92%)"></div>
<div style="left:432px;top:143px;width:27px;height:20px;background:linear-gradient(90deg,rgba(66,68,74,0),#42444a 92%)"></div>
<div style="left:640px;top:143px;width:34px;height:20px;background:linear-gradient(90deg,rgba(30,32,39,0),#1e2027 95%)"></div>
</div>
<div class="t" style="left:10.60px;top:5.99px;font-size:13.6px;line-height:13.6px;color:#ebebeb;font-weight:400;letter-spacing:0.378px;">Actividades</div>
<div class="t" style="left:137.40px;top:5.99px;font-size:13.6px;line-height:13.6px;color:#ebebeb;font-weight:400;letter-spacing:0.201px;">VirtualBox Machine</div>
<div class="t" style="left:625.10px;top:5.99px;font-size:13.6px;line-height:13.6px;color:#ebebeb;font-weight:400;letter-spacing:-0.302px;">15 de nov</div>
<div class="t" style="left:689.40px;top:5.99px;font-size:13.6px;line-height:13.6px;color:#ebebeb;font-weight:400;letter-spacing:-0.058px;">20:34</div>
<div class="t" style="left:523.40px;top:35.98px;font-size:14.2px;line-height:14.2px;color:#ffffff;font-weight:700;letter-spacing:-0.141px;">Kali Linux [Corriendo] - Oracle VM VirtualBox</div>
<div class="t" style="left:76.60px;top:63.40px;font-size:13.7px;line-height:13.7px;color:#2e2e2e;font-weight:400;letter-spacing:0.310px;">Archivo</div>
<div class="t" style="left:138.10px;top:63.40px;font-size:13.7px;line-height:13.7px;color:#2e2e2e;font-weight:400;letter-spacing:0.364px;">Máquina</div>
<div class="t" style="left:206.90px;top:63.40px;font-size:13.7px;line-height:13.7px;color:#2e2e2e;font-weight:400;letter-spacing:0.327px;">Ver</div>
<div class="t" style="left:242.20px;top:63.40px;font-size:13.7px;line-height:13.7px;color:#2e2e2e;font-weight:400;letter-spacing:0.341px;">Entrada</div>
<div class="t" style="left:306.30px;top:63.40px;font-size:13.7px;line-height:13.7px;color:#2e2e2e;font-weight:400;letter-spacing:0.261px;">Dispositivos</div>
<div class="t" style="left:396.30px;top:63.40px;font-size:13.7px;line-height:13.7px;color:#2e2e2e;font-weight:400;letter-spacing:0.130px;">Ayuda</div>
<div class="t" style="left:381.40px;top:87.65px;font-size:14px;line-height:14px;color:#e6e8ec;font-weight:400;-webkit-text-stroke:.1px;letter-spacing:-0.353px;">Actividad 11. Fuciones h...</div>
<div class="t" style="left:568.40px;top:87.65px;font-size:14px;line-height:14px;color:#e6e8ec;font-weight:400;-webkit-text-stroke:.1px;letter-spacing:0.125px;">Mozilla Firefox</div>
<div class="t" style="left:755.40px;top:87.65px;font-size:14px;line-height:14px;color:#e6e8ec;font-weight:400;-webkit-text-stroke:.1px;letter-spacing:-0.010px;">alumno@kali: ~/Descar...</div>
<div class="t" style="left:1014.40px;top:87.65px;font-size:14px;line-height:14px;color:#e6e8ec;font-weight:400;-webkit-text-stroke:.1px;letter-spacing:-0.134px;">08:34 PM</div>
<div class="t" style="left:1183.10px;top:87.65px;font-size:14px;line-height:14px;color:#e6e8ec;font-weight:400;-webkit-text-stroke:.1px;letter-spacing:1.134px;">96%</div>
<div class="t" style="left:879.10px;top:117.18px;font-size:11.6px;line-height:11.6px;color:#e8e9ec;font-weight:700;-webkit-text-stroke:.1px;letter-spacing:-0.522px;">alumno@kali: ~/Descargas</div>
<div class="t" style="left:689.40px;top:140.65px;font-size:14px;line-height:14px;color:#eceef0;font-weight:400;-webkit-text-stroke:.1px;letter-spacing:0.052px;">Archivo</div>
<div class="t" style="left:754.40px;top:140.65px;font-size:14px;line-height:14px;color:#eceef0;font-weight:400;-webkit-text-stroke:.1px;letter-spacing:-0.259px;">Acciones</div>
<div class="t" style="left:827.40px;top:140.65px;font-size:14px;line-height:14px;color:#eceef0;font-weight:400;-webkit-text-stroke:.1px;letter-spacing:0.084px;">Editar</div>
<div class="t" style="left:881.90px;top:140.65px;font-size:14px;line-height:14px;color:#eceef0;font-weight:400;-webkit-text-stroke:.1px;letter-spacing:0.081px;">Vista</div>
<div class="t" style="left:930.60px;top:140.65px;font-size:14px;line-height:14px;color:#eceef0;font-weight:400;-webkit-text-stroke:.1px;letter-spacing:-0.163px;">Ayuda</div>
<div class="t" style="left:1197.80px;top:702.89px;font-size:13.6px;line-height:13.6px;color:#2a2a2a;font-weight:400;letter-spacing:0.172px;">Ctrl Derecho</div>
</div>
</body>
</html>
